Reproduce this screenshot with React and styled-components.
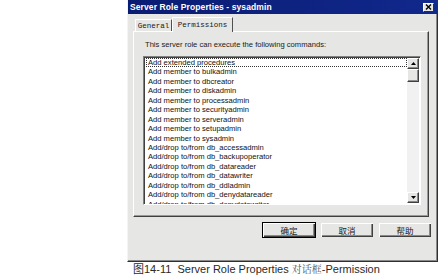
import styled, { createGlobalStyle } from 'styled-components';

const Global = createGlobalStyle`
  html, body {
    margin: 0;
    padding: 0;
    background: #ffffff;
  }
  body {
    font-family: "Liberation Sans", Arial, sans-serif;
  }
`;

const Page = styled.div`
  width: 440px;
  height: 276px;
  display: flex;
  flex-direction: column;
  overflow: hidden;
`;

const Window = styled.div`
  margin-left: 127px;
  width: 311px;
  height: 262px;
  box-sizing: border-box;
  background: #e6e6e4;
  border-left: 1px solid #f4f4f4;
  border-right: 1px solid #303030;
  border-bottom: 1px solid #303030;
  box-shadow: inset -1px -1px 0 #8a8a8a;
  display: flex;
  flex-direction: column;
`;

const TitleBar = styled.div`
  height: 14px;
  display: flex;
  align-items: center;
  justify-content: space-between;
  padding: 0 3px 0 2px;
  background: linear-gradient(90deg, #0a1c72, #11288c);
`;

const Title = styled.span`
  color: #ffffff;
  font-weight: bold;
  font-size: 8.5px;
  letter-spacing: 0.1px;
`;

const CloseBtn = styled.div`
  width: 11px;
  height: 9px;
  box-sizing: border-box;
  background: #e6e6e4;
  border-top: 1px solid #ffffff;
  border-left: 1px solid #ffffff;
  border-right: 1px solid #303030;
  border-bottom: 1px solid #303030;
  display: flex;
  align-items: center;
  justify-content: center;
`;

const TabStrip = styled.div`
  display: flex;
  align-items: flex-end;
  height: 16px;
  margin-top: 1px;
  padding-left: 7px;
`;

const Tab = styled.div`
  height: ${(p) => (p.active ? 15 : 12)}px;
  width: ${(p) => p.w}px;
  box-sizing: border-box;
  border-top: 1px solid #ffffff;
  border-left: 1px solid #ffffff;
  border-right: 1px solid #505050;
  margin-bottom: ${(p) => (p.active ? -1 : 0)}px;
  background: #e6e6e4;
  position: relative;
  z-index: ${(p) => (p.active ? 2 : 1)};
  display: flex;
  align-items: center;
  justify-content: center;
  font-family: "Liberation Mono", "Courier New", monospace;
  font-size: 7.5px;
  color: #202020;
`;

const Panel = styled.div`
  margin-left: 5px;
  width: 296px;
  height: 186px;
  box-sizing: border-box;
  border-top: 1px solid #ffffff;
  border-left: 1px solid #ffffff;
  border-right: 1px solid #404040;
  border-bottom: 1px solid #404040;
  box-shadow: inset -1px -1px 0 #9a9a9a;
  padding: 8px 0 0 9px;
  display: flex;
  flex-direction: column;
`;

const Label = styled.div`
  font-size: 7.6px;
  color: #1a1a1a;
  padding-left: 2px;
  height: 16px;
  line-height: 10px;
`;

const ListBox = styled.div`
  width: 278px;
  height: 149px;
  box-sizing: border-box;
  border-top: 1px solid #808080;
  border-left: 1px solid #808080;
  border-right: 1px solid #ffffff;
  border-bottom: 1px solid #ffffff;
  box-shadow: inset 1px 1px 0 #404040;
  background: #ffffff;
  display: flex;
  overflow: hidden;
`;

const Items = styled.div`
  flex: 1;
  padding: 1px 0 0 2px;
  overflow: hidden;
`;

const Item = styled.div`
  height: 9.45px;
  line-height: 9.45px;
  font-size: 7.6px;
  color: #111;
  white-space: nowrap;
  padding-left: 2px;
  box-sizing: border-box;
  outline: ${(p) => (p.focus ? '1px dotted #333' : 'none')};
  outline-offset: -1px;
`;

const ScrollBar = styled.div`
  width: 12px;
  display: flex;
  flex-direction: column;
  background: #f1f1f1;
  margin: 1px 1px 1px 0;
`;

const ScrollBtn = styled.div`
  height: ${(p) => p.h}px;
  box-sizing: border-box;
  background: #e6e6e4;
  border-top: 1px solid #ffffff;
  border-left: 1px solid #ffffff;
  border-right: 1px solid #404040;
  border-bottom: 1px solid #404040;
  box-shadow: inset -1px -1px 0 #8a8a8a;
  display: flex;
  align-items: center;
  justify-content: center;
`;

const Track = styled.div`
  flex: 1;
`;

const ButtonRow = styled.div`
  display: flex;
  justify-content: flex-end;
  gap: 4px;
  margin-top: 5px;
  padding-right: 5px;
`;

const Button = styled.div`
  width: 54px;
  height: 16px;
  box-sizing: border-box;
  background: #e6e6e4;
  border: 1px solid ${(p) => (p.primary ? '#000' : 'transparent')};
  box-shadow: inset 1px 1px 0 #ffffff, inset -1px -1px 0 #404040,
    inset -2px -2px 0 #8a8a8a;
  display: flex;
  align-items: center;
  justify-content: center;
  font-family: "Noto Sans CJK SC", sans-serif;
  font-size: 8.5px;
  color: #1a1a1a;
`;

const Caption = styled.div`
  margin-left: 133px;
  height: 14px;
  line-height: 14px;
  font-size: 11px;
  color: #2a2a2a;
  white-space: nowrap;
  font-family: "Liberation Sans", "Noto Sans CJK SC", sans-serif;
`;

const Serif = styled.span`
  font-family: "Noto Serif CJK SC", "Noto Sans CJK SC", serif;
  font-size: 10px;
  color: #555;
`;

const items = [
  'Add extended procedures',
  'Add member to bulkadmin',
  'Add member to dbcreator',
  'Add member to diskadmin',
  'Add member to processadmin',
  'Add member to securityadmin',
  'Add member to serveradmin',
  'Add member to setupadmin',
  'Add member to sysadmin',
  'Add/drop to/from db_accessadmin',
  'Add/drop to/from db_backupoperator',
  'Add/drop to/from db_datareader',
  'Add/drop to/from db_datawriter',
  'Add/drop to/from db_ddladmin',
  'Add/drop to/from db_denydatareader',
  'Add/drop to/from db_denydatawriter',
];

function Arrow({ up }) {
  return (
    <svg width="5" height="3" viewBox="0 0 5 3">
      <path d={up ? 'M2.5 0 L5 3 L0 3 Z' : 'M0 0 L5 0 L2.5 3 Z'} fill="#000" />
    </svg>
  );
}

export default function App() {
  return (
    <Page>
      <Global />
      <Window>
        <TitleBar>
          <Title>Server Role Properties - sysadmin</Title>
          <CloseBtn>
            <svg width="7" height="6" viewBox="0 0 7 6">
              <path d="M1 0.5 L6 5.5 M6 0.5 L1 5.5" stroke="#000" strokeWidth="1.4" />
            </svg>
          </CloseBtn>
        </TitleBar>
        <TabStrip>
          <Tab w={37}>General</Tab>
          <Tab w={61} active>
            Permissions
          </Tab>
        </TabStrip>
        <Panel>
          <Label>This server role can execute the following commands:</Label>
          <ListBox>
            <Items>
              {items.map((t, i) => (
                <Item key={t} focus={i === 0}>
                  {t}
                </Item>
              ))}
            </Items>
            <ScrollBar>
              <ScrollBtn h={11}>
                <Arrow up />
              </ScrollBtn>
              <ScrollBtn h={13} />
              <Track />
              <ScrollBtn h={11}>
                <Arrow />
              </ScrollBtn>
            </ScrollBar>
          </ListBox>
        </Panel>
        <ButtonRow>
          <Button primary>确定</Button>
          <Button>取消</Button>
          <Button>帮助</Button>
        </ButtonRow>
      </Window>
      <Caption>
        图14-11&nbsp; Server Role Properties <Serif>对话框</Serif>-Permission
      </Caption>
    </Page>
  );
}
